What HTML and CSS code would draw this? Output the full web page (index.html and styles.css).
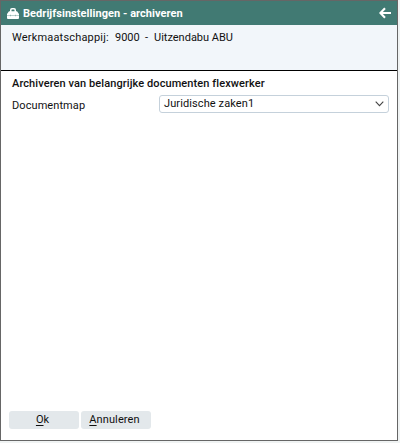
FILE: index.html
```html
<!DOCTYPE html>
<html lang="nl">
<head>
<meta charset="utf-8">
<title>Bedrijfsinstellingen - archiveren</title>
<link rel="stylesheet" href="styles.css">
</head>
<body>
<main class="window">
  <header class="titlebar">
    <svg class="case" viewBox="0 0 12 11" width="12" height="11"><path d="M2 3.2h1V2Q3 0 5 0h2q2 0 2 2v1.2h1L12 6v4q0 1-1 1H1q-1 0-1-1V6zM4.5 3.2h3V2Q7.500 1.500 7 1.500H5Q4.500 1.500 4.500 2z" fill="#fff" fill-rule="evenodd"/><path d="M0 7.500h12M3.500 6.700v1.600M8.500 6.700v1.600" fill="none" stroke="#417a73" stroke-width=".9" opacity=".4"/></svg>
    <h1 class="title">Bedrijfsinstellingen - archiveren</h1>
    <svg class="back" viewBox="0 0 12 12" width="12" height="12"><path d="M6 1.200L1.400 6 6 10.800M1.500 6H12" fill="none" stroke="#fff" stroke-width="2.100"/></svg>
  </header>
  <section class="info"><span class="company">Werkmaatschappij:</span><span class="number">9000</span><span class="dash">-</span><span>Uitzendabu ABU</span></section>
  <section class="content">
    <h2 class="heading">Archiveren van belangrijke documenten flexwerker</h2>
    <div class="field">
      <span class="label">Documentmap</span>
      <div class="select"><span>Juridische zaken1</span><svg viewBox="0 0 9 6" width="9" height="6"><path d="M.7.7L4.500 4.600 8.300.7" fill="none" stroke="#444" stroke-width="1.100"/></svg></div>
    </div>
  </section>
  <footer class="actions">
    <button class="button"><u>O</u>k</button>
    <button class="button annul"><u>A</u>nnuleren</button>
  </footer>
</main>
</body>
</html>
```
FILE: styles.css
```css
* { box-sizing: border-box; }
body {
  margin: 0;
  background: #f0f3f3;
  color: #111;
  font: 11px/14px Roboto, sans-serif;
}
.window {
  display: flex;
  flex-direction: column;
  width: 398px;
  height: 441px;
  background: #fff;
  border: 1px solid #666;
}
.titlebar {
  display: flex;
  align-items: center;
  height: 24px;
  padding: 0 6px;
  background: #417a73;
  color: #fff;
}
.title {
  flex: 1;
  margin: 0 0 0 4px;
  padding-top: 2px;
  font-size: 11px;
  font-weight: 700;
  line-height: 14px;
  letter-spacing: 0.05px;
}
.info {
  display: flex;
  height: 46px;
  padding: 6px 11px;
  background: #f2f6fa;
  border-bottom: 1px solid #000;
}
.company {
  width: 103px;
  letter-spacing: 0.18px;
}
.number { width: 30px; }
.dash { width: 9px; }
.content {
  flex: 1;
  padding: 6px 8px 0 11px;
}
.heading {
  margin: 0;
  font-size: 11px;
  font-weight: 500;
  line-height: 14px;
  letter-spacing: 0.09px;
}
.field {
  display: flex;
  margin-top: 4px;
}
.label {
  width: 147px;
  padding-top: 4px;
  letter-spacing: 0.08px;
}
.select {
  display: flex;
  flex: 1;
  align-items: center;
  justify-content: space-between;
  height: 18px;
  padding: 0 4px;
  border: 1px solid #c5d1db;
  border-radius: 3px;
  letter-spacing: 0.1px;
}
.actions {
  display: flex;
  gap: 2px;
  padding: 0 8px 11px;
}
.button {
  width: 70px;
  height: 18px;
  padding: 0 3px 0 0;
  border: 0;
  border-radius: 3px;
  background: #e3e8eb;
  color: #111;
  font: 11px/16px Roboto, sans-serif;
}
.annul { letter-spacing: 0.1px; }
.button u { text-underline-offset: 2px; }
```
